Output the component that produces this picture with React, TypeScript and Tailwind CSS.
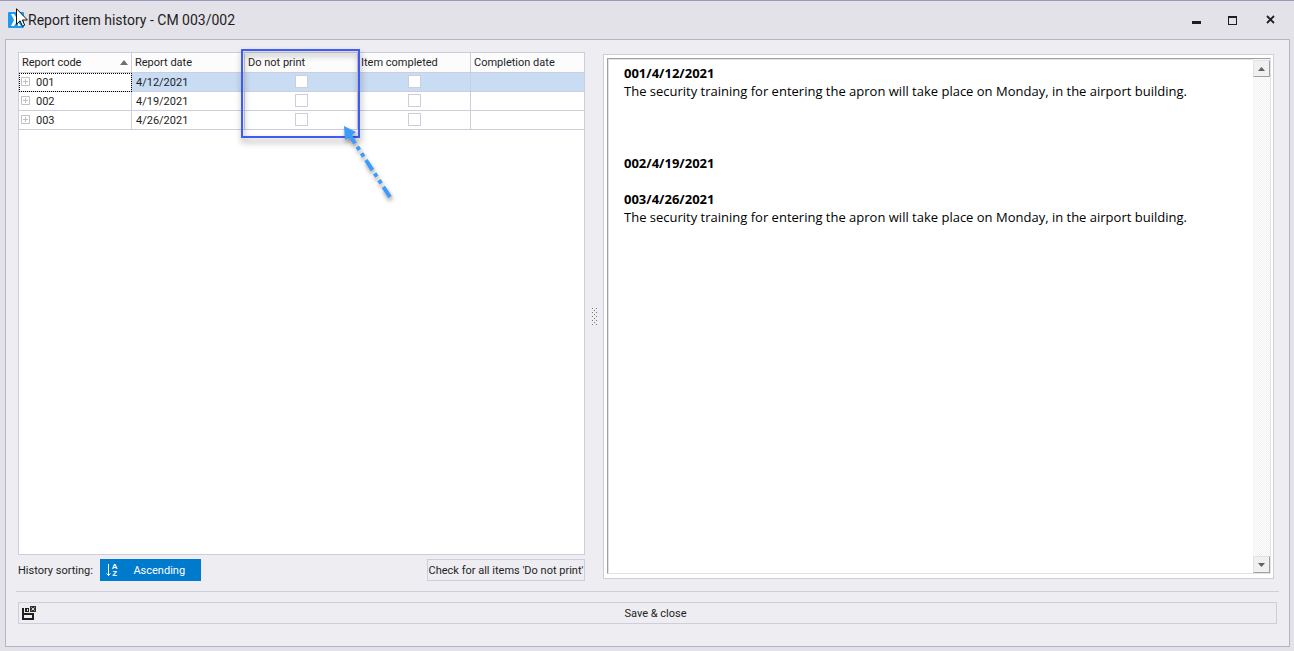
import { useState } from 'react';

interface HistoryItem {
  code: string;
  date: string;
  text: string;
  blankLines: string;
  doNotPrint: boolean;
  completed: boolean;
  completionDate: string;
}

const TRAINING =
  'The security training for entering the apron will take place on Monday, in the airport building.';

const initialItems: HistoryItem[] = [
  { code: '001', date: '4/12/2021', text: TRAINING, blankLines: 'mb-[54px]', doNotPrint: false, completed: false, completionDate: '' },
  { code: '002', date: '4/19/2021', text: '', blankLines: 'mb-[18px]', doNotPrint: false, completed: false, completionDate: '' },
  { code: '003', date: '4/26/2021', text: TRAINING, blankLines: '', doNotPrint: false, completed: false, completionDate: '' },
];

const headClass = 'relative border-b border-[#cdcddc] bg-[#fcfcfc] px-[3px] text-left font-normal whitespace-nowrap';
const cellClass = 'border-b border-[#cdcddc] px-1 pt-0.5 align-top';
const checkboxClass = 'block size-[13px] mx-auto appearance-none border border-[#cdcddc] bg-white checked:bg-[#007acc]';

function AppLogo() {
  return (
    <span className="relative block size-4 shrink-0">
      <svg viewBox="0 0 16 16" className="block size-4" aria-hidden="true">
        <rect width="16" height="16" rx="1" fill="#1e9bf0" />
        <path d="M3 2h3l4 6-4 6H3l3-6zM10 10l3 4h-3z" fill="#fff" />
      </svg>
      {/* Mouse pointer */}
      <svg viewBox="0 0 12 19" className="absolute -top-1 left-2 h-[19px] w-3" aria-hidden="true">
        <path d="M.5.7v15.6l3.6-3.5 2.3 5.4 2.3-1-2.3-5.2h5z" fill="#fff" stroke="#111" />
      </svg>
    </span>
  );
}

function TitleBar() {
  return (
    <header className="flex h-[39px] shrink-0 items-center border-t border-[#9a9abb] pl-2">
      <AppLogo />
      <h1 className="ml-1 text-[14px] text-[#1e1e1e]">Report item history - CM 003/002</h1>
      <div className="ml-auto flex pr-[5px]">
        <button type="button" aria-label="Minimize" className="flex h-6 w-[37px] items-center justify-center">
          <svg viewBox="0 0 11 11" className="size-[11px]">
            <path d="M1 6h9v3H1z" fill="#1e1e1e" />
          </svg>
        </button>
        <button type="button" aria-label="Maximize" className="flex h-6 w-[37px] items-center justify-center">
          <svg viewBox="0 0 11 11" className="size-[11px]">
            <path d="M0 1h9v9H0zM1 3v6h7V3z" fill="#1e1e1e" fillRule="evenodd" />
          </svg>
        </button>
        <button type="button" aria-label="Close" className="flex h-6 w-[37px] items-center justify-center">
          <svg viewBox="0 0 11 11" className="size-[11px]">
            <path d="M2 1l7 7M9 1l-7 7" stroke="#1e1e1e" strokeWidth="1.8" />
          </svg>
        </button>
      </div>
    </header>
  );
}

function PrintCallout() {
  return (
    <>
      <span className="pointer-events-none absolute -top-1 -right-[3px] -left-1 z-10 h-[89px] border-2 border-[#3f5bf6] drop-shadow-[1px_4px_3px_rgba(0,0,0,0.45)]" />
      <svg
        viewBox="0 0 56 84"
        className="pointer-events-none absolute top-[70px] left-[97px] z-10 h-[84px] w-14 drop-shadow-[1px_3px_2px_rgba(0,0,0,0.4)]"
        aria-hidden="true"
      >
        <path d="M2 3l12 6-4 3-7 5z" fill="#3d9bfb" />
        <path
          d="M7 11L48 74"
          stroke="#3d9bfb"
          strokeWidth="4"
          strokeDasharray="11 4 4 4 4 4 12 4 4 4 4 4 13"
        />
      </svg>
    </>
  );
}

function HistoryTable({ items, onToggle }: {
  items: HistoryItem[];
  onToggle: (code: string, field: 'doNotPrint' | 'completed') => void;
}) {
  return (
    <div className="min-h-0 flex-1 border border-[#cdcddc] bg-white">
      <table className="w-full table-fixed border-separate border-spacing-0">
        <thead>
          <tr className="h-5">
            <th className={`${headClass} border-r`}>
              <span className="flex items-center justify-between">
                Report code
                <svg viewBox="0 0 8 5" className="h-[5px] w-2" aria-hidden="true">
                  <path d="M4 0l4 5H0z" fill="#707070" />
                </svg>
              </span>
            </th>
            <th className={`${headClass} border-r`}>Report date</th>
            <th className={`${headClass} border-r`}>
              Do not print
              <PrintCallout />
            </th>
            <th className={`${headClass} border-r`}>Item completed</th>
            <th className={headClass}>Completion date</th>
          </tr>
        </thead>
        <tbody>
          {items.map((item, i) => (
            <tr key={item.code} className={`h-[19px] ${i === 0 ? 'bg-[#c8dcf4]' : 'bg-white'}`}>
              <td
                className={`border-r border-b border-[#cdcddc] bg-white px-0.5 pt-0.5 align-top ${
                  i === 0 ? 'outline-1 -outline-offset-1 outline-dotted outline-black' : ''
                }`}
              >
                <span className="flex items-start gap-1.5">
                  <button type="button" aria-label={`Expand ${item.code}`} className="mt-0.5 block">
                    <svg viewBox="0 0 9 9" className="block size-[9px]">
                      <path d="M.5.5h8v8h-8zM2 4.5h5M4.5 2v5" fill="none" stroke="#c0c0c0" />
                    </svg>
                  </button>
                  {item.code}
                </span>
              </td>
              <td className={`${cellClass} border-r`}>{item.date}</td>
              <td className={`${cellClass} border-r`}>
                <input
                  type="checkbox"
                  aria-label={`Do not print ${item.code}`}
                  className={checkboxClass}
                  checked={item.doNotPrint}
                  onChange={() => onToggle(item.code, 'doNotPrint')}
                />
              </td>
              <td className={`${cellClass} border-r`}>
                <input
                  type="checkbox"
                  aria-label={`Item completed ${item.code}`}
                  className={checkboxClass}
                  checked={item.completed}
                  onChange={() => onToggle(item.code, 'completed')}
                />
              </td>
              <td className={cellClass}>{item.completionDate}</td>
            </tr>
          ))}
        </tbody>
      </table>
    </div>
  );
}

function ScrollButton({ label, path }: { label: string; path: string }) {
  return (
    <button
      type="button"
      aria-label={label}
      className="flex h-[17px] w-full items-center justify-center border border-t-[#e3e3e3] border-r-[#a0a0a0] border-b-[#a0a0a0] border-l-[#e3e3e3] bg-[#f0f0f0]"
    >
      <svg viewBox="0 0 7 4" className="h-1 w-[7px]">
        <path d={path} fill="#606060" />
      </svg>
    </button>
  );
}

function Preview({ items }: { items: HistoryItem[] }) {
  return (
    <section className="mt-0.5 mb-0.5 flex min-w-0 flex-[664] border border-[#cdcddc] bg-white pt-[3px] pr-0.5 pb-1 pl-[3px]">
      <div className="flex min-w-0 flex-1 border border-t-[#a0a0a0] border-r-[#e3e3e3] border-b-[#e3e3e3] border-l-[#a0a0a0]">
        <div className="min-w-0 flex-1 border-t border-l border-[#e3e3e3] pt-1 pl-[15px] font-['Open_Sans','Noto_Sans',sans-serif] text-[13px] leading-[18px] text-black">
          {items.map((item) => (
            <div key={item.code} className={item.blankLines}>
              <h2 className="font-bold">
                {item.code}/{item.date}
              </h2>
              {item.text && <p>{item.text}</p>}
            </div>
          ))}
        </div>
        <div className="flex w-[17px] shrink-0 flex-col justify-between bg-[repeating-conic-gradient(#f0f0f0_0_25%,#fff_0_50%)] bg-[length:2px_2px] pt-px">
          <ScrollButton label="Scroll up" path="M3.5 0L7 4H0z" />
          <ScrollButton label="Scroll down" path="M0 0h7L3.5 4z" />
        </div>
      </div>
    </section>
  );
}

function Splitter() {
  return (
    <div role="separator" aria-orientation="vertical" className="flex w-[18px] shrink-0 items-center justify-center">
      <svg viewBox="0 0 5 17" className="h-[17px] w-[5px]" aria-hidden="true">
        {[0, 4, 8, 12, 16].map((y) => (
          <path key={y} d={`M0 ${y}h1v1H0zM4 ${y}h1v1H4z`} fill="#777" />
        ))}
        {[2, 6, 10, 14].map((y) => (
          <path key={y} d={`M2 ${y}h1v1H2z`} fill="#777" />
        ))}
      </svg>
    </div>
  );
}

export default function App() {
  const [items, setItems] = useState(initialItems);
  const [ascending, setAscending] = useState(true);

  const toggle = (code: string, field: 'doNotPrint' | 'completed') =>
    setItems((prev) => prev.map((it) => (it.code === code ? { ...it, [field]: !it[field] } : it)));

  const checkAll = () => setItems((prev) => prev.map((it) => ({ ...it, doNotPrint: true })));

  const sorted = ascending ? items : [...items].reverse();

  return (
    <div className="flex h-screen flex-col bg-[#e3e2e8] font-[Roboto,'Noto_Sans',sans-serif] text-[11px] leading-4 text-[#1e1e1e]">
      <TitleBar />

      <main className="mr-1 mb-1 ml-[5px] flex min-h-0 flex-1 flex-col border border-[#b3b3ca] bg-[#eeedf2] px-2.5 pt-3">
        <div className="flex min-h-0 flex-1 pr-[5px]">
          <section className="flex min-w-0 flex-[567] flex-col pl-0.5">
            <HistoryTable items={sorted} onToggle={toggle} />
            <div className="mt-1 flex items-center">
              <span className="pt-0.5">History sorting:</span>
              <button
                type="button"
                onClick={() => setAscending(!ascending)}
                className="ml-[7px] flex h-[22px] w-[101px] items-center bg-[#007acc] pl-1.5 text-white"
              >
                <svg viewBox="0 0 5 14" className="h-[14px] w-[5px]" fill="none" stroke="#fff" aria-hidden="true">
                  <path d="M2.5 1v12M.5 10.5l2 2 2-2" />
                </svg>
                <span className="ml-px flex flex-col font-['Liberation_Sans',sans-serif] text-[8px] leading-[7px] font-bold" aria-hidden="true">
                  <span>A</span>
                  <span>Z</span>
                </span>
                <span className="flex-1 pt-0.5 text-center">{ascending ? 'Ascending' : 'Descending'}</span>
              </button>
              <button
                type="button"
                onClick={checkAll}
                className="ml-auto h-[22px] w-[158px] border border-[#cdcddc] pt-0.5 whitespace-nowrap"
              >
                Check for all items 'Do not print'
              </button>
            </div>
          </section>
          <Splitter />
          <Preview items={sorted} />
        </div>

        <footer className="mt-2.5 border-t border-[#cdcddc] px-0.5 pt-2.5 pb-[22px]">
          <button
            type="button"
            className="relative flex h-[22px] w-full items-center justify-center border border-[#cdcddc]"
          >
            <svg viewBox="0 0 14 14" className="absolute left-[3px] size-[14px]" aria-hidden="true">
              <path d="M0 2h2v5h10v7H0zM2 9v3h8V9zM3 2h4v4H3zM5 3v2h1V3z" fill="#1e1e1e" fillRule="evenodd" />
              <path d="M8 0h6v6H8z" fill="#3b302c" />
              <path d="M9.5 1.5l3 3M12.5 1.5l-3 3" stroke="#d8d4d4" />
            </svg>
            <span className="pt-0.5 pl-4">Save &amp; close</span>
          </button>
        </footer>
      </main>
    </div>
  );
}
